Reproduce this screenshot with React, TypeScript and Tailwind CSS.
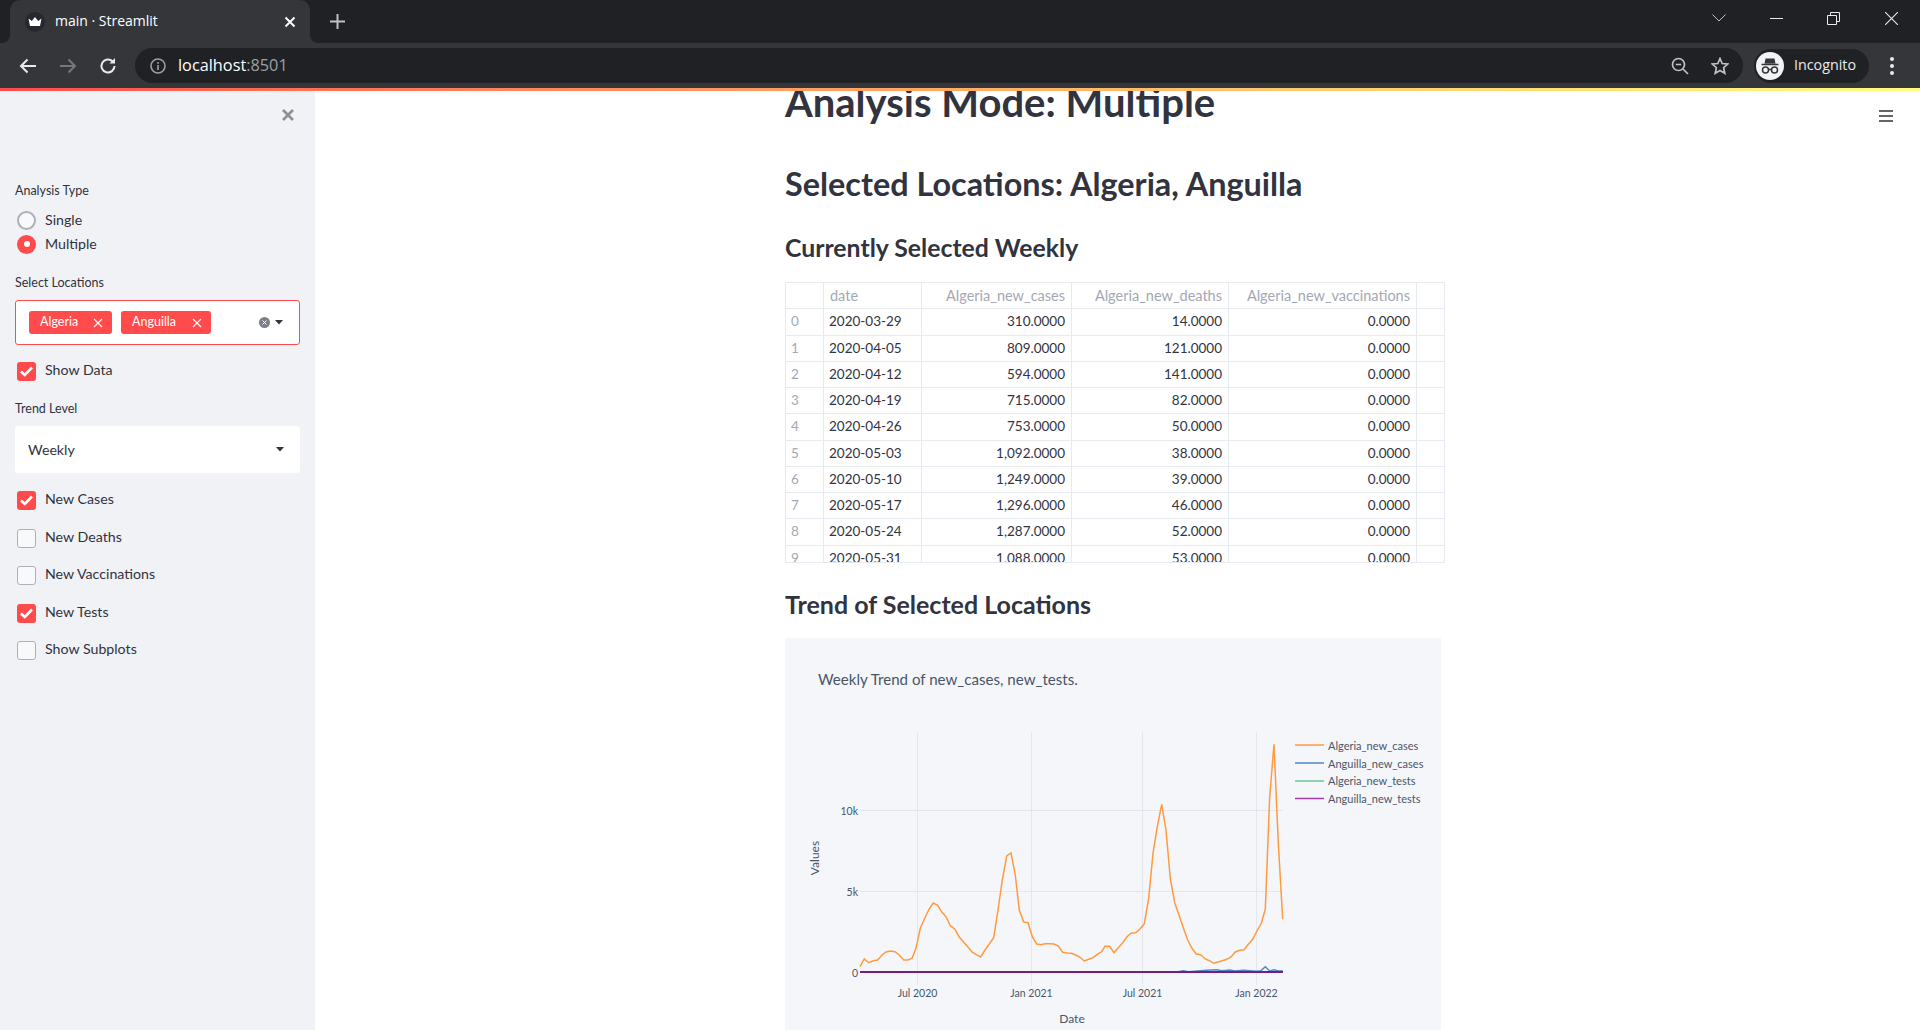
import React from "react";

const rows = [
  ["0", "2020-03-29", "310.0000", "14.0000"],
  ["1", "2020-04-05", "809.0000", "121.0000"],
  ["2", "2020-04-12", "594.0000", "141.0000"],
  ["3", "2020-04-19", "715.0000", "82.0000"],
  ["4", "2020-04-26", "753.0000", "50.0000"],
  ["5", "2020-05-03", "1,092.0000", "38.0000"],
  ["6", "2020-05-10", "1,249.0000", "39.0000"],
  ["7", "2020-05-17", "1,296.0000", "46.0000"],
  ["8", "2020-05-24", "1,287.0000", "52.0000"],
  ["9", "2020-05-31", "1,088.0000", "53.0000"],
];

// traced from the plot, in crop coordinates
const casesLeft = [[240,1010],[253,987],[266,998],[280,992],[293,990],[306,975],[318,966],[332,963],[345,965],[358,975],[371,990],[384,990],[396,985],[408,955],[421,895],[434,865],[447,838],[460,819],[473,826],[486,847],[498,860],[511,887],[524,897],[537,920],[550,935],[563,950],[576,966],[589,974],[602,981],[615,960],[628,942],[641,923],[654,840],[667,750],[680,678],[693,669],[706,735],[718,840],[731,876],[744,878],[757,920],[770,942],[783,944],[796,941],[809,941],[822,942],[835,948],[848,967],[861,969],[874,970],[887,975],[900,982],[913,993],[926,988],[939,983],[952,973]];
const casesRight = [[5,965],[15,949],[29,949],[42,968],[55,953],[68,938],[81,920],[94,909],[107,908],[120,897],[133,881],[146,805],[159,670],[172,590],[185,523],[198,600],[211,745],[224,818],[237,855],[250,893],[263,930],[276,955],[289,972],[302,974],[315,986],[328,992],[341,1000],[354,996],[367,992],[380,988],[393,981],[406,966],[419,961],[432,959],[445,943],[458,928],[471,903],[484,880],[496,838],[509,500],[522,343],[535,640],[548,868]];
const blueRight = [[0,1026],[235,1025],[250,1022],[265,1025],[320,1021],[350,1019],[365,1022],[390,1020],[405,1023],[430,1021],[470,1024],[482,1022],[496,1010],[509,1023],[522,1019],[535,1023],[548,1022]];

const toPts = (list: number[][], ox: number) =>
  list.map(([x, y]) => `${(ox + x / 3).toFixed(1)},${(630 + y / 3).toFixed(1)}`).join(" ");

const casesLine = toPts(casesLeft, 780) + " " + toPts(casesRight, 1100);
const blueLine = toPts(blueRight, 1100);

const CheckRow = ({ label, checked, mb }: { label: string; checked?: boolean; mb: string }) => (
  <div className={`flex items-center h-[20px] ${mb}`}>
    {checked ? (
      <div className="w-[19px] h-[19px] ml-[2px] rounded-[3px] bg-[#ff4b4b] flex items-center justify-center">
        <svg width="15" height="12" viewBox="0 0 15 12" fill="none">
          <path d="M2 6.5 L5.8 10 L13 2.5" stroke="#fff" strokeWidth="2.6" />
        </svg>
      </div>
    ) : (
      <div className="w-[19px] h-[19px] ml-[2px] rounded-[3px] bg-[#f8f9fb] border border-[#aeb0b8]" />
    )}
    <span className="ml-[9px] text-[14.2px] -mt-[2px] text-[#31333f]">{label}</span>
  </div>
);

const Chip = ({ label, w }: { label: string; w: string }) => (
  <div className={`h-[23px] ${w} rounded-[3px] bg-[#ff4b4b] text-white text-[12.5px] flex items-center justify-between pl-[11px] pr-[9px]`}>
    <span>{label}</span>
    <svg width="10" height="10" viewBox="0 0 10 10" stroke="#fff" strokeWidth="1.1">
      <path d="M1 1 L9 9 M9 1 L1 9" />
    </svg>
  </div>
);

const Caret = () => (
  <svg width="8" height="5" viewBox="0 0 8 5" fill="#31333f">
    <path d="M0 0 H8 L4 4.5 Z" />
  </svg>
);

const ChromeBar = () => (
  <div className="font-['Open_Sans',sans-serif]">
    {/* tab strip */}
    <div className="h-[43px] bg-[#202124] flex items-end relative">
      <div className="relative ml-[10px] w-[300px] h-[43px] bg-[#35363a] rounded-t-[10px] flex items-center pl-[15px] pr-[14px]">
        <svg className="absolute -left-[8px] bottom-0" width="8" height="8" viewBox="0 0 8 8" fill="#35363a">
          <path d="M8 0 V8 H0 A8 8 0 0 0 8 0 Z" />
        </svg>
        <svg className="absolute -right-[8px] bottom-0" width="8" height="8" viewBox="0 0 8 8" fill="#35363a">
          <path d="M0 0 V8 H8 A8 8 0 0 1 0 0 Z" />
        </svg>
        <svg width="20" height="20" viewBox="0 0 20 20">
          <circle cx="10" cy="10" r="10" fill="#26272f" />
          <path d="M3.5 6.5 L6.8 9 L10 5 L13.2 9 L16.500 6.500 L15 14 H5 Z" fill="#fff" />
        </svg>
        <span className="ml-[10px] text-[14px] -mt-[2px] text-white flex-1">main · Streamlit</span>
        <svg width="12" height="12" viewBox="0 0 12 12" stroke="#fff" strokeWidth="2">
          <path d="M1.500 1.500 L10.500 10.500 M10.500 1.500 L1.500 10.500" />
        </svg>
      </div>
      <svg className="ml-[20px] mb-[14px]" width="15" height="15" viewBox="0 0 15 15" stroke="#bdc1c6" strokeWidth="2">
        <path d="M7.500 0 V15 M0 7.500 H15" />
      </svg>
      <div className="flex-1" />
      <div className="flex items-center h-[36px] self-start pr-[22px]">
        <svg width="14" height="8" viewBox="0 0 14 8" fill="none" stroke="#bdc1c6" strokeWidth="1">
          <path d="M0.500 0.500 L7 7 L13.500 0.500" />
        </svg>
        <svg className="ml-[44px]" width="13" height="1" viewBox="0 0 13 1" stroke="#e8eaed">
          <path d="M0 0.500 H13" />
        </svg>
        <svg className="ml-[44px]" width="13" height="13" viewBox="0 0 13 13" fill="none" stroke="#e8eaed" strokeWidth="1">
          <path d="M0.500 3.500 H9.500 V12.500 H0.500 Z M3.500 3.500 V0.500 H12.500 V9.500 H9.500" />
        </svg>
        <svg className="ml-[45px]" width="13" height="13" viewBox="0 0 13 13" stroke="#e8eaed" strokeWidth="1.1">
          <path d="M0 0 L13 13 M13 0 L0 13" />
        </svg>
      </div>
    </div>
    {/* toolbar */}
    <div className="h-[45px] bg-[#35363a] flex items-center pl-[19px]">
      <svg width="18" height="16" viewBox="0 0 18 16" fill="none" stroke="#e8eaed" strokeWidth="2">
        <path d="M17 8 H2 M8.500 1.500 L2 8 L8.500 14.500" />
      </svg>
      <svg className="ml-[22px]" width="18" height="16" viewBox="0 0 18 16" fill="none" stroke="#75777b" strokeWidth="2">
        <path d="M1 8 H16 M9.500 1.500 L16 8 L9.500 14.500" />
      </svg>
      <svg className="ml-[22px]" width="18" height="18" viewBox="0 0 18 18" fill="none" stroke="#e8eaed" strokeWidth="2">
        <path d="M15.500 9 A6.500 6.500 0 1 1 13.500 4.300" />
        <path d="M16 1 V6.500 H10.500 Z" fill="#e8eaed" stroke="none" />
      </svg>
      <div className="ml-[18px] w-[1608px] h-[35px] rounded-full bg-[#202124] flex items-center pl-[15px] pr-[14px]">
        <svg width="16" height="16" viewBox="0 0 16 16" fill="none" stroke="#9aa0a6" strokeWidth="1.6">
          <circle cx="8" cy="8" r="7" />
          <path d="M8 7 V12 M8 4 V5.800" />
        </svg>
        <span className="ml-[12px] text-[16.300px] text-white">localhost<span className="text-[#9aa0a6]">:8501</span></span>
        <div className="flex-1" />
        <svg width="18" height="18" viewBox="0 0 18 18" fill="none" stroke="#bdc1c6" strokeWidth="1.700">
          <circle cx="7.500" cy="7.500" r="6" />
          <path d="M4.800 7.500 H10.200 M12 12 L17 17" />
        </svg>
        <svg className="ml-[22px]" width="18" height="18" viewBox="0 0 18 18" fill="none" stroke="#bdc1c6" strokeWidth="1.700">
          <path d="M9 1.500 L11.200 6.500 L16.800 7 L12.600 10.700 L13.800 16.200 L9 13.400 L4.200 16.200 L5.400 10.700 L1.200 7 L6.800 6.500 Z" />
        </svg>
      </div>
      <div className="ml-[11px] w-[115px] h-[34px] rounded-full bg-[#202124] flex items-center pl-[2px]">
        <svg width="28" height="28" viewBox="0 0 28 28">
          <circle cx="14" cy="14" r="14" fill="#f1f3f4" />
          <path d="M9.500 6.500 H18.500 L19.500 11.500 H8.500 Z M5.500 11.800 H22.500 V13.300 H5.500 Z" fill="#35363a" />
          <g fill="none" stroke="#35363a" strokeWidth="1.500">
            <circle cx="9.500" cy="18" r="3" />
            <circle cx="18.500" cy="18" r="3" />
            <path d="M12.500 17.500 H15.500" />
          </g>
        </svg>
        <span className="ml-[10px] text-[14.300px] -mt-[2px] text-[#e8eaed]">Incognito</span>
      </div>
      <div className="ml-[21px] flex flex-col gap-[3px]">
        <div className="w-[4px] h-[4px] rounded-full bg-[#e8eaed]" />
        <div className="w-[4px] h-[4px] rounded-full bg-[#e8eaed]" />
        <div className="w-[4px] h-[4px] rounded-full bg-[#e8eaed]" />
      </div>
    </div>
    <div className="h-[3px] bg-gradient-to-r from-[#ff4b4b] to-[#fffd80]" />
  </div>
);

const Sidebar = () => (
  <aside className="w-[315px] h-[939px] shrink-0 bg-[#f0f2f6] pl-[15px] pr-[15px] relative text-[#31333f]">
    <svg className="absolute left-[282px] top-[18px]" width="12" height="12" viewBox="0 0 12 12" stroke="#8d8f98" strokeWidth="2.600">
      <path d="M1 1 L11 11 M11 1 L1 11" />
    </svg>
    <div className="pt-[91px] text-[12.500px] leading-[18px]">Analysis Type</div>
    <div className="mt-[8px] flex items-center h-[24px]">
      <div className="w-[19px] h-[19px] ml-[2px] rounded-full bg-[#f8f9fb] border-2 border-[#aeb0b8]" />
      <span className="ml-[9px] text-[14.200px]">Single</span>
    </div>
    <div className="flex items-center h-[24px]">
      <div className="w-[19px] h-[19px] ml-[2px] rounded-full bg-[#ff4b4b] flex items-center justify-center">
        <div className="w-[6px] h-[6px] rounded-full bg-white" />
      </div>
      <span className="ml-[9px] text-[14.200px]">Multiple</span>
    </div>
    <div className="mt-[18px] text-[12.500px] leading-[18px]">Select Locations</div>
    <div className="mt-[8px] h-[45px] rounded-[3px] bg-white border border-[#ff4b4b] flex items-center pl-[13px] pr-[16px]">
      <Chip label="Algeria" w="w-[83px]" />
      <div className="ml-[9px]">
        <Chip label="Anguilla" w="w-[90px]" />
      </div>
      <div className="flex-1" />
      <svg width="11" height="11" viewBox="0 0 11 11">
        <circle cx="5.500" cy="5.500" r="5.500" fill="#7c7e89" />
        <path d="M3.500 3.500 L7.500 7.500 M7.500 3.500 L3.500 7.500" stroke="#fff" strokeWidth="1" />
      </svg>
      <div className="ml-[5px] flex">
        <Caret />
      </div>
    </div>
    <div className="mt-[16px]">
      <CheckRow label="Show Data" checked mb="mb-0" />
    </div>
    <div className="mt-[19px] text-[12.500px] leading-[18px]">Trend Level</div>
    <div className="mt-[8px] h-[47px] rounded-[3px] bg-white flex items-center pl-[13px] pr-[16px]">
      <span className="text-[14.200px] flex-1">Weekly</span>
      <Caret />
    </div>
    <div className="mt-[17px]">
      <CheckRow label="New Cases" checked mb="mb-[18px]" />
      <CheckRow label="New Deaths" mb="mb-[17px]" />
      <CheckRow label="New Vaccinations" mb="mb-[18px]" />
      <CheckRow label="New Tests" checked mb="mb-[17px]" />
      <CheckRow label="Show Subplots" mb="mb-0" />
    </div>
  </aside>
);

const DataTable = () => (
  <div className="w-[660px] h-[281px] overflow-hidden border-b border-[#e6eaf1]">
    <table className="w-[659px] table-fixed border-collapse text-[13.500px] leading-[25.250px] text-[#31333f]">
      <colgroup>
        <col className="w-[38px]" />
        <col className="w-[98px]" />
        <col className="w-[150px]" />
        <col className="w-[157px]" />
        <col className="w-[188px]" />
        <col className="w-[28px]" />
      </colgroup>
      <thead>
        <tr className="text-[#a3a8b4] font-normal text-[14.500px]">
          <th className="border border-[#e6eaf1] font-normal" />
          <th className="border border-[#e6eaf1] font-normal text-left px-[6px]">date</th>
          <th className="border border-[#e6eaf1] font-normal text-right px-[6px]">Algeria_new_cases</th>
          <th className="border border-[#e6eaf1] font-normal text-right px-[6px]">Algeria_new_deaths</th>
          <th className="border border-[#e6eaf1] font-normal text-right px-[6px]">Algeria_new_vaccinations</th>
          <th className="border border-[#e6eaf1] font-normal" />
        </tr>
      </thead>
      <tbody>
        {rows.map((r) => (
          <tr key={r[0]}>
            <td className="border border-[#e6eaf1] px-[5px] text-[#a3a8b4]">{r[0]}</td>
            <td className="border border-[#e6eaf1] px-[5px]">{r[1]}</td>
            <td className="border border-[#e6eaf1] px-[6px] text-right">{r[2]}</td>
            <td className="border border-[#e6eaf1] px-[6px] text-right">{r[3]}</td>
            <td className="border border-[#e6eaf1] px-[6px] text-right">0.0000</td>
            <td className="border border-[#e6eaf1]" />
          </tr>
        ))}
      </tbody>
    </table>
  </div>
);

const TrendChart = () => (
  <svg className="block" width="656" height="392" viewBox="785 638 656 392" fontFamily="Lato, sans-serif">
    <rect x="785" y="638" width="656" height="392" fill="#f4f6fa" />
    <text x="818" y="685" fontSize="15.100" fill="#4a5568">Weekly Trend of new_cases, new_tests.</text>
    <g stroke="#e1e6ef" strokeWidth="1">
      <path d="M917.500 732 V985 M1031.500 732 V985 M1142.500 732 V985 M1256.500 732 V985" />
      <path d="M860 810.500 H1283 M860 891.500 H1283" />
    </g>
    <polyline points={casesLine} fill="none" stroke="#ff9a3f" strokeWidth="1.500" />
    <polyline points={blueLine} fill="none" stroke="#4f8ac4" strokeWidth="1.500" />
    <path d="M860 972 H1283" stroke="#7a1a82" strokeWidth="2" />
    <g fontSize="10.500" fill="#4a5568" textAnchor="end">
      <text x="858" y="815">10k</text>
      <text x="858" y="896">5k</text>
      <text x="858" y="977">0</text>
    </g>
    <g fontSize="10.500" fill="#4a5568" textAnchor="middle">
      <text x="917.500" y="997">Jul 2020</text>
      <text x="1031.500" y="997">Jan 2021</text>
      <text x="1142.500" y="997">Jul 2021</text>
      <text x="1256.500" y="997">Jan 2022</text>
    </g>
    <text x="1072" y="1023" fontSize="12" fill="#4a5568" textAnchor="middle">Date</text>
    <text transform="translate(819 858) rotate(-90)" fontSize="12" fill="#4a5568" textAnchor="middle">Values</text>
    <g strokeWidth="1.500">
      <path d="M1295 745 H1324" stroke="#ff9a3f" />
      <path d="M1295 763 H1324" stroke="#4f8ac4" />
      <path d="M1295 781 H1324" stroke="#6ec58e" />
      <path d="M1295 798.500 H1324" stroke="#a23da8" />
    </g>
    <g fontSize="11" fill="#4a5568">
      <text x="1328" y="750">Algeria_new_cases</text>
      <text x="1328" y="768">Anguilla_new_cases</text>
      <text x="1328" y="785">Algeria_new_tests</text>
      <text x="1328" y="803">Anguilla_new_tests</text>
    </g>
  </svg>
);

export default function App() {
  return (
    <div className="w-[1920px] h-[1030px] overflow-hidden bg-white font-['Lato',sans-serif]">
      <ChromeBar />
      <div className="flex h-[939px]">
        <Sidebar />
        <main className="relative flex-1 h-[939px] overflow-hidden pl-[470px] text-[#31333f]">
          <svg className="absolute right-[27px] top-[19px]" width="14" height="12" viewBox="0 0 14 12" stroke="#31333f" strokeWidth="1.500">
            <path d="M0 1 H14 M0 6 H14 M0 11 H14" />
          </svg>
          <h1 className="-mt-[15px] h-[52px] text-[40px] leading-[52px] font-bold whitespace-nowrap">Analysis Mode: Multiple</h1>
          <h2 className="mt-[33px] h-[46px] text-[32.400px] leading-[46px] font-bold whitespace-nowrap">Selected Locations: Algeria, Anguilla</h2>
          <h3 className="mt-[23px] h-[36px] text-[24.800px] leading-[36px] font-bold whitespace-nowrap">Currently Selected Weekly</h3>
          <div className="mt-[16px]">
            <DataTable />
          </div>
          <h3 className="mt-[23px] h-[36px] text-[25px] leading-[36px] font-bold whitespace-nowrap">Trend of Selected Locations</h3>
          <div className="mt-[16px]">
            <TrendChart />
          </div>
        </main>
      </div>
    </div>
  );
}
